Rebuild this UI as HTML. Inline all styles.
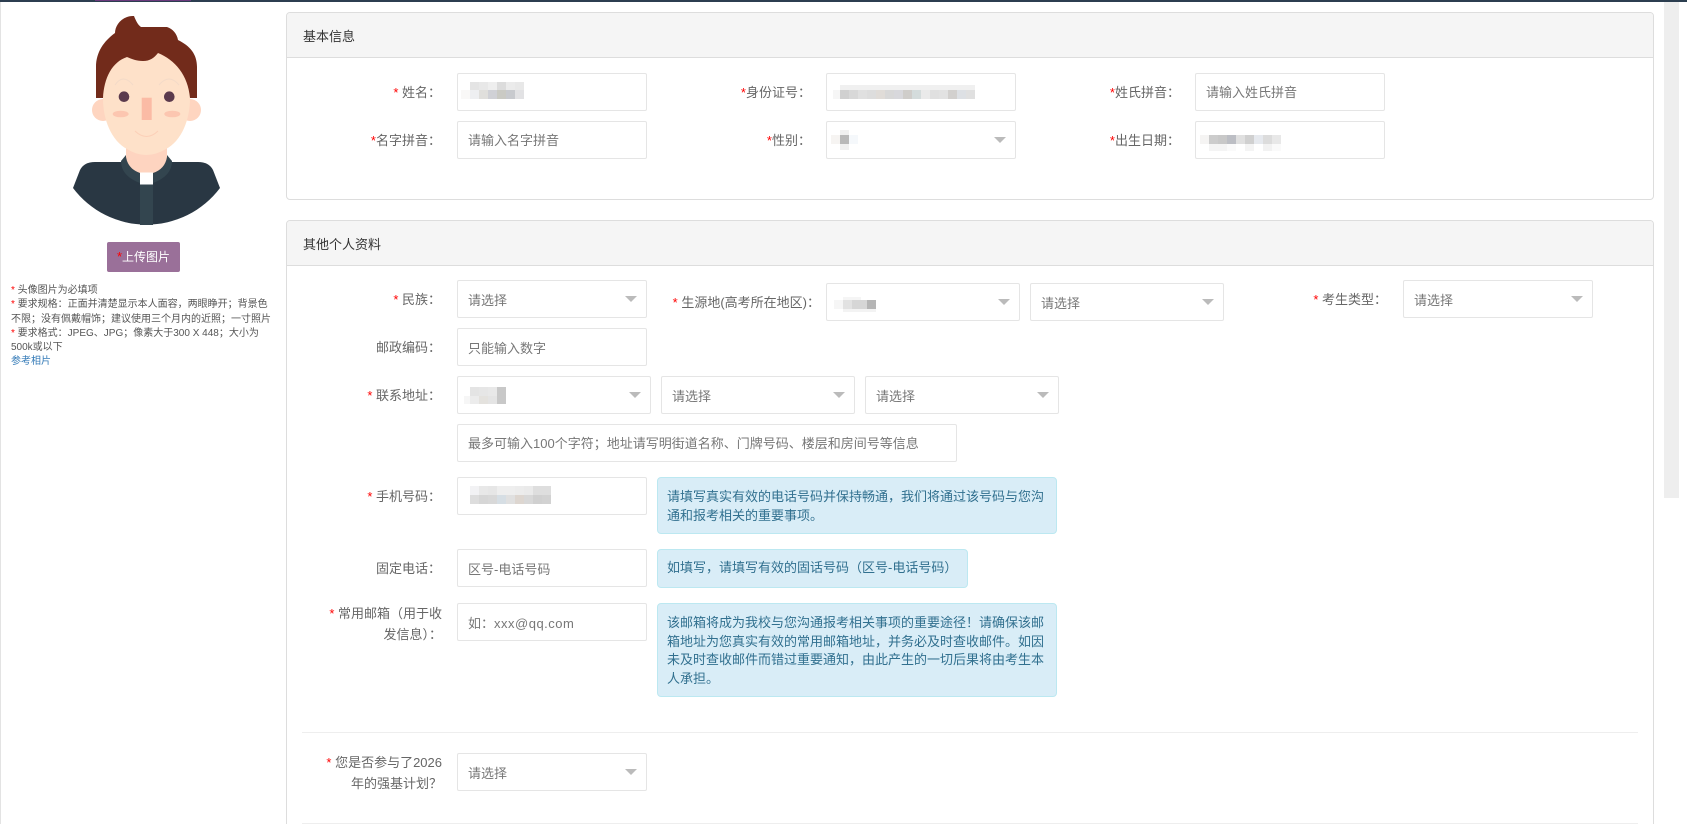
<!DOCTYPE html>
<html lang="zh-CN">
<head>
<meta charset="utf-8">
<title>基本信息</title>
<style>
html,body{margin:0;padding:0;background:#fff;overflow:hidden;width:1687px;height:824px;}
#w{position:relative;width:1687px;height:824px;overflow:hidden;font-family:"Liberation Sans","Noto Sans CJK SC",sans-serif;font-size:13px;color:#666;background:#fff;}
div,span,a{box-sizing:border-box;}
.abs{position:absolute;}
.panel{position:absolute;left:286px;width:1368px;border:1px solid #ddd;border-radius:4px;background:#fff;}
.head{position:absolute;left:0;right:0;top:0;background:#f5f5f5;border-bottom:1px solid #ddd;border-radius:3px 3px 0 0;color:#333;padding-left:16px;font-size:13px;}
.f{position:absolute;height:38px;border:1px solid #e5e5e5;border-radius:2px;background:#fff;color:#777;line-height:37px;padding-left:10px;font-size:13px;white-space:nowrap;}
.f.d{line-height:39px;}
.f.s:after{content:"";position:absolute;right:9px;top:15px;border-left:6px solid transparent;border-right:6px solid transparent;border-top:6px solid #bbb;}
.l{position:absolute;width:300px;text-align:right;color:#666;line-height:20px;font-size:13px;white-space:nowrap;}
.l b,.st{color:#f00;font-weight:normal;}
.al{position:absolute;left:657px;width:400px;background:#d9edf7;border:1px solid #bce8f1;border-radius:4px;color:#31708f;font-size:13px;line-height:18.57px;padding:10px 9px 0;}
.hr{position:absolute;left:302px;width:1336px;height:1px;background:#eee;}
svg.m{position:absolute;shape-rendering:crispEdges;}
.note{position:absolute;left:11px;top:284px;width:262px;font-size:10px;line-height:14.3px;color:#555;}
.note a{color:#337ab7;text-decoration:none;}
</style>
</head>
<body>
<div id="w">
<div class="abs" style="left:0;top:0;width:1687px;height:2px;background:#2c3e50;"></div>
<div class="abs" style="left:95px;top:0;width:96px;height:1px;background:#6b3a7d;"></div>
<div class="abs" style="left:0;top:2px;width:1px;height:822px;background:#e3e3e3;"></div>
<div class="abs" style="left:1664px;top:2px;width:15px;height:496px;background:#eee;"></div>

<!-- avatar -->
<svg class="abs" style="left:60px;top:0" width="180" height="240" viewBox="60 0 180 240">
<path d="M73 188L80 170Q84 162 95 162L198 162Q209 162 213 170L220 188A92 92 0 0 1 73 188Z" fill="#293743"/>
<path d="M126 155L121 161Q121 176 140 183L153 183Q172 176 172 161L167 155Z" fill="#33454f"/>
<rect x="140" y="184" width="13" height="41" fill="#33454f"/>
<path d="M126 145L126 157Q128 169 140 173L153 173Q165 169 167 157L167 145Z" fill="#fed4c0"/>
<rect x="140" y="172.5" width="13" height="12" fill="#fff"/>
<circle cx="103" cy="110" r="11" fill="#fed5c0"/>
<circle cx="190" cy="110" r="11" fill="#fed5c0"/>
<path d="M103 98C103 125 115 143 127 149Q146 161 166 149C178 143 190 125 190 98C190 70 170 50 146 50C122 50 103 70 103 98Z" fill="#fee1c9"/>
<path d="M96 98L96 67C96 52 104 41 115 33C115 27 119 20 127 17C130 16 132 16 134 16C136 21 138 25 141 27L167 27C173 29 177 34 178 40C190 46 197 54 197 67L197 98L190 98C188 75 175 60 158 53C154 58 150 61 143 61C136 61 132 59 127 57C112 62 104 78 103 98Z" fill="#722b1b"/>
<path d="M115 85Q123 73 133 85M159 85Q169 73 179 85" fill="none" stroke="#f3dac8" stroke-width="1"/>
<circle cx="124" cy="96.7" r="5.3" fill="#5b3a4d"/>
<circle cx="169.3" cy="96.7" r="5.3" fill="#5b3a4d"/>
<rect x="141.7" y="97.7" width="10" height="22.3" fill="#fbbba5"/>
<ellipse cx="120.7" cy="114" rx="8" ry="3.3" fill="#fcc6b0"/>
<ellipse cx="172.3" cy="114" rx="8" ry="3.3" fill="#fcc6b0"/>
<path d="M135 131Q146.5 142 158 131" fill="none" stroke="#fcd0b8" stroke-width="1"/>
</svg>

<div class="abs" style="left:107px;top:242px;width:73px;height:30px;background:#9a7099;border-radius:2px;color:#fff;text-align:center;line-height:30px;font-size:12px;"><span class="st" style="font-size:13px;">*</span>上传图片</div>
<div class="note"><span class="st">*</span> 头像图片为必填项<br><span class="st">*</span> 要求规格：正面并清楚显示本人面容，两眼睁开；背景色不限；没有佩戴帽饰；建议使用三个月内的近照；一寸照片<br><span class="st">*</span> 要求格式：JPEG、JPG；像素大于300 X 448；大小为500k或以下<br><a href="#">参考相片</a></div>

<!-- panel 1 -->
<div class="panel" style="top:12px;height:188px;"><div class="head" style="height:45px;line-height:47px;">基本信息</div></div>
<div class="l" style="left:141px;top:83px;"><b>*</b> 姓名：</div>
<div class="f" style="left:457px;top:73px;width:190px;"></div>
<div class="l" style="left:511px;top:83px;"><b>*</b>身份证号：</div>
<div class="f" style="left:826px;top:73px;width:190px;"></div>
<div class="l" style="left:880px;top:83px;"><b>*</b>姓氏拼音：</div>
<div class="f" style="left:1195px;top:73px;width:190px;">请输入姓氏拼音</div>

<div class="l" style="left:141px;top:131px;"><b>*</b>名字拼音：</div>
<div class="f" style="left:457px;top:121px;width:190px;">请输入名字拼音</div>
<div class="l" style="left:511px;top:131px;"><b>*</b>性别：</div>
<div class="f s" style="left:826px;top:121px;width:190px;"></div>
<div class="l" style="left:880px;top:131px;"><b>*</b>出生日期：</div>
<div class="f" style="left:1195px;top:121px;width:190px;"></div>

<!-- panel 2 -->
<div class="panel" style="top:220px;height:640px;"><div class="head" style="height:45px;line-height:48px;">其他个人资料</div></div>
<div class="l" style="left:141px;top:290px;"><b>*</b> 民族：</div>
<div class="f s d" style="left:457px;top:280px;width:190px;">请选择</div>
<div class="l" style="left:520px;top:293px;"><b>*</b> 生源地(高考所在地区)：</div>
<div class="f s d" style="left:826px;top:283px;width:194px;"></div>
<div class="f s d" style="left:1030px;top:283px;width:194px;">请选择</div>
<div class="l" style="left:1087px;top:290px;"><b>*</b> 考生类型：</div>
<div class="f s d" style="left:1403px;top:280px;width:190px;">请选择</div>

<div class="l" style="left:141px;top:338px;">邮政编码：</div>
<div class="f d" style="left:457px;top:328px;width:190px;">只能输入数字</div>
<div class="l" style="left:141px;top:386px;"><b>*</b> 联系地址：</div>
<div class="f s d" style="left:457px;top:376px;width:194px;"></div>
<div class="f s d" style="left:661px;top:376px;width:194px;">请选择</div>
<div class="f s d" style="left:865px;top:376px;width:194px;">请选择</div>
<div class="f" style="left:457px;top:424px;width:500px;">最多可输入100个字符；地址请写明街道名称、门牌号码、楼层和房间号等信息</div>

<div class="l" style="left:141px;top:487px;"><b>*</b> 手机号码：</div>
<div class="f" style="left:457px;top:477px;width:190px;"></div>
<div class="al" style="top:477px;height:57px;">请填写真实有效的电话号码并保持畅通，我们将通过该号码与您沟通和报考相关的重要事项。</div>

<div class="l" style="left:141px;top:559px;">固定电话：</div>
<div class="f d" style="left:457px;top:549px;width:190px;">区号-电话号码</div>
<div class="al" style="width:311px;top:549px;height:39px;white-space:nowrap;padding-top:9px;">如填写，请填写有效的固话号码（区号-电话号码）</div>

<div class="l" style="left:142px;top:603px;line-height:21px;"><b>*</b> 常用邮箱（用于收<br>发信息）：</div>
<div class="f d" style="left:457px;top:603px;width:190px;">如：<span style="letter-spacing:.5px;">xxx@qq.com</span></div>
<div class="al" style="top:603px;height:94px;">该邮箱将成为我校与您沟通报考相关事项的重要途径！请确保该邮箱地址为您真实有效的常用邮箱地址，并务必及时查收邮件。如因未及时查收邮件而错过重要通知，由此产生的一切后果将由考生本人承担。</div>

<div class="hr" style="top:732px;"></div>
<div class="l" style="left:142px;top:753px;line-height:20.5px;"><b>*</b> 您是否参与了2026<br>年的强基计划？</div>
<div class="f s d" style="left:457px;top:753px;width:190px;">请选择</div>
<div class="hr" style="top:823px;"></div>

<!-- mosaics -->
<svg class="m" style="left:461px;top:82px" width="63" height="17">
<rect x="9" width="9" height="8" fill="#e4e4e4"/><rect x="18" width="9" height="8" fill="#e8e8e8"/><rect x="27" width="9" height="8" fill="#eeeeee"/><rect x="36" width="9" height="8" fill="#dcdcdc"/><rect x="45" width="9" height="8" fill="#ebebeb"/><rect x="54" width="9" height="8" fill="#e8e8e8"/>
<rect y="8" width="9" height="9" fill="#f9f8f7"/><rect x="9" y="8" width="9" height="9" fill="#eeeff1"/><rect x="18" y="8" width="9" height="9" fill="#e0dfdc"/><rect x="27" y="8" width="9" height="9" fill="#d0d1d6"/><rect x="36" y="8" width="9" height="9" fill="#cacac4"/><rect x="45" y="8" width="9" height="9" fill="#c8cace"/><rect x="54" y="8" width="9" height="9" fill="#e2e2e4"/>
</svg>
<svg class="m" style="left:833px;top:85px" width="142" height="14">
<rect x="7" width="135" height="5" fill="#f0f0f0"/><rect y="5" width="7" height="9" fill="#f6f6f6"/>
<rect x="7" y="5" width="9" height="9" fill="#d0d0d0"/><rect x="16" y="5" width="9" height="9" fill="#d8d8d8"/><rect x="25" y="5" width="9" height="9" fill="#e0e0e0"/><rect x="34" y="5" width="9" height="9" fill="#dddddd"/><rect x="43" y="5" width="9" height="9" fill="#e0dcd8"/><rect x="52" y="5" width="9" height="9" fill="#d8d8d8"/><rect x="61" y="5" width="9" height="9" fill="#d8d8dc"/><rect x="70" y="5" width="9" height="9" fill="#cfcdca"/><rect x="79" y="5" width="9" height="9" fill="#d4dcdc"/><rect x="88" y="5" width="9" height="9" fill="#eaeaea"/><rect x="97" y="5" width="9" height="9" fill="#e0e0e0"/><rect x="106" y="5" width="9" height="9" fill="#e2e2e2"/><rect x="115" y="5" width="9" height="9" fill="#d2d0ce"/><rect x="124" y="5" width="9" height="9" fill="#dde0e4"/><rect x="133" y="5" width="9" height="9" fill="#e0e0e0"/>
</svg>
<svg class="m" style="left:831px;top:130px" width="27" height="20">
<rect x="9" width="9" height="20" fill="#f0f0f0"/><rect y="5" width="9" height="9" fill="#f6f4f2"/><rect x="18" y="5" width="9" height="9" fill="#f5f8fb"/><rect x="9" y="5" width="9" height="9" fill="#b9b9b9"/>
</svg>
<svg class="m" style="left:1200px;top:135px" width="81" height="16">
<rect width="9" height="9" fill="#f5f4f3"/><rect x="9" width="9" height="9" fill="#cccccc"/><rect x="18" width="9" height="9" fill="#c8c8c8"/><rect x="27" width="9" height="9" fill="#bcbec4"/><rect x="36" width="9" height="9" fill="#e0e0e0"/><rect x="45" width="9" height="9" fill="#d0d0d0"/><rect x="54" width="9" height="9" fill="#e6e9ee"/><rect x="63" width="9" height="9" fill="#dcdcdc"/><rect x="72" width="9" height="9" fill="#e8e8e8"/>
<rect x="9" y="9" width="18" height="7" fill="#f4f4f4"/><rect x="27" y="9" width="9" height="7" fill="#fafafa"/><rect x="45" y="9" width="9" height="7" fill="#f4f4f4"/><rect x="63" y="9" width="9" height="7" fill="#f2f2f2"/><rect x="72" y="9" width="9" height="7" fill="#fafafa"/>
</svg>
<svg class="m" style="left:834px;top:297px" width="42" height="16">
<rect x="9" width="18" height="3" fill="#f5f5f5"/><rect y="3" width="9" height="9" fill="#f6f6f6"/><rect x="9" y="3" width="9" height="9" fill="#e2e2e2"/><rect x="18" y="3" width="15" height="9" fill="#d6d6d6"/><rect x="33" y="3" width="9" height="9" fill="#b5b5b5"/><rect x="9" y="12" width="33" height="3" fill="#f3f3f3"/>
</svg>
<svg class="m" style="left:464px;top:387px" width="42" height="17">
<rect x="6" width="9" height="9" fill="#e4e4e4"/><rect x="15" width="9" height="9" fill="#e6e6e6"/><rect x="24" width="9" height="9" fill="#e8e8e8"/><rect x="33" width="9" height="9" fill="#c8c8c8"/>
<rect y="9" width="6" height="8" fill="#f6f6f6"/><rect x="6" y="9" width="9" height="8" fill="#ececec"/><rect x="15" y="9" width="9" height="8" fill="#e4e2de"/><rect x="24" y="9" width="9" height="8" fill="#e4e4e4"/><rect x="33" y="9" width="9" height="8" fill="#c8c8c8"/>
</svg>
<svg class="m" style="left:470px;top:486px" width="81" height="18">
<rect width="9" height="9" fill="#f2f2f4"/><rect x="9" width="9" height="9" fill="#e8e8e8"/><rect x="18" width="9" height="9" fill="#e6e6e6"/><rect x="27" width="9" height="9" fill="#eeeeee"/><rect x="36" width="9" height="9" fill="#eeeeee"/><rect x="45" width="9" height="9" fill="#ececec"/><rect x="54" width="9" height="9" fill="#eaeaea"/><rect x="63" width="18" height="9" fill="#dedede"/>
<rect y="9" width="9" height="9" fill="#dddddd"/><rect x="9" y="9" width="9" height="9" fill="#d6d6d6"/><rect x="18" y="9" width="9" height="9" fill="#d8d8d8"/><rect x="27" y="9" width="9" height="9" fill="#d6dee4"/><rect x="36" y="9" width="9" height="9" fill="#e0e0e0"/><rect x="45" y="9" width="9" height="9" fill="#ddd6d0"/><rect x="54" y="9" width="9" height="9" fill="#d8d8d8"/><rect x="63" y="9" width="9" height="9" fill="#d0d0d0"/><rect x="72" y="9" width="9" height="9" fill="#d2d2d2"/>
</svg>
</div>
</body>
</html>
